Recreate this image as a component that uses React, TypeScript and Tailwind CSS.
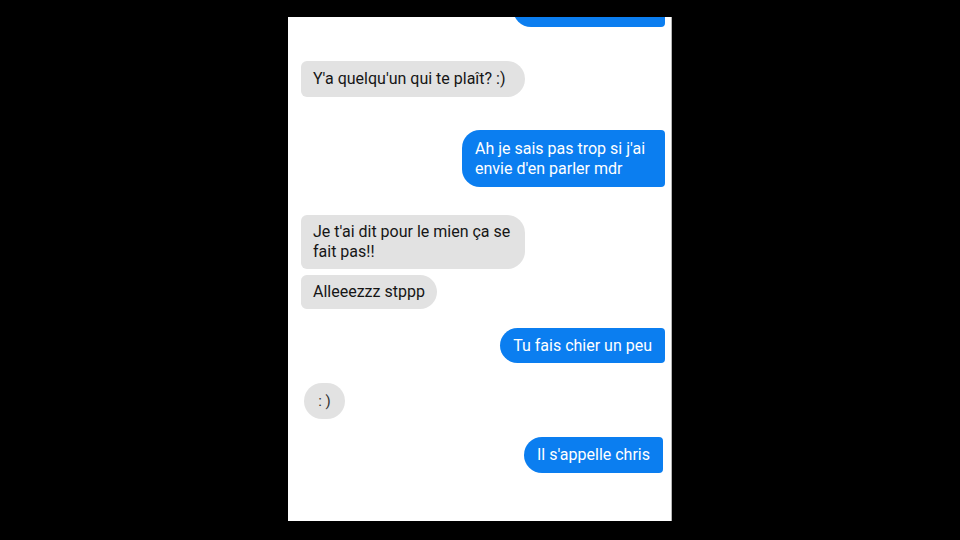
const font = { fontFamily: 'Roboto, "Noto Sans", sans-serif' }

function Theirs({ text, className = '' }: { text: string; className?: string }) {
  return (
    <div
      className={`self-start bg-[#e2e2e2] text-[#161616] text-[16px] leading-5 px-3 rounded-l-[6px] rounded-r-[18px] ${className}`}
    >
      {text}
    </div>
  )
}

function Mine({ text, className = '' }: { text: string; className?: string }) {
  return (
    <div
      className={`self-end bg-[#0b7ef0] text-white text-[16px] leading-5 px-[13px] rounded-l-[18px] rounded-r-[4px] ${className}`}
    >
      {text}
    </div>
  )
}

export default function App() {
  return (
    <div className="w-[960px] h-[540px] bg-black flex justify-center pt-[17px]" style={font}>
      <div className="w-[384px] h-[504px] bg-white border-r border-[#b5b5b5] overflow-hidden flex flex-col pl-[13px] pr-[6px]">
        <div className="self-end w-[152px] h-[36px] -mt-[26px] bg-[#0b7ef0] rounded-l-[18px] rounded-r-[4px]" />

        <Theirs text="Y'a quelqu'un qui te plaît? :)" className="mt-[34px] w-[224px] py-2" />

        <Mine text="Ah je sais pas trop si j'ai envie d'en parler mdr" className="mt-[33px] w-[203px] py-[8.5px]" />

        <Theirs text="Je t'ai dit pour le mien ça se fait pas!!" className="mt-[28px] w-[224px] py-[7px]" />

        <Theirs text="Alleeezzz stppp" className="mt-[6px] whitespace-nowrap py-[7px]" />

        <Mine text="Tu fais chier un peu" className="mt-[19px] whitespace-nowrap py-[7.5px]" />

        <div className="self-start ml-[3px] mt-[20px] w-[41px] h-[36px] rounded-full bg-[#e2e2e2] text-[#333] text-[15px] flex items-center justify-center">
          : )
        </div>

        <Mine text="Il s'appelle chris" className="mt-[18px] mr-[2px] whitespace-nowrap py-2" />
      </div>
    </div>
  )
}
